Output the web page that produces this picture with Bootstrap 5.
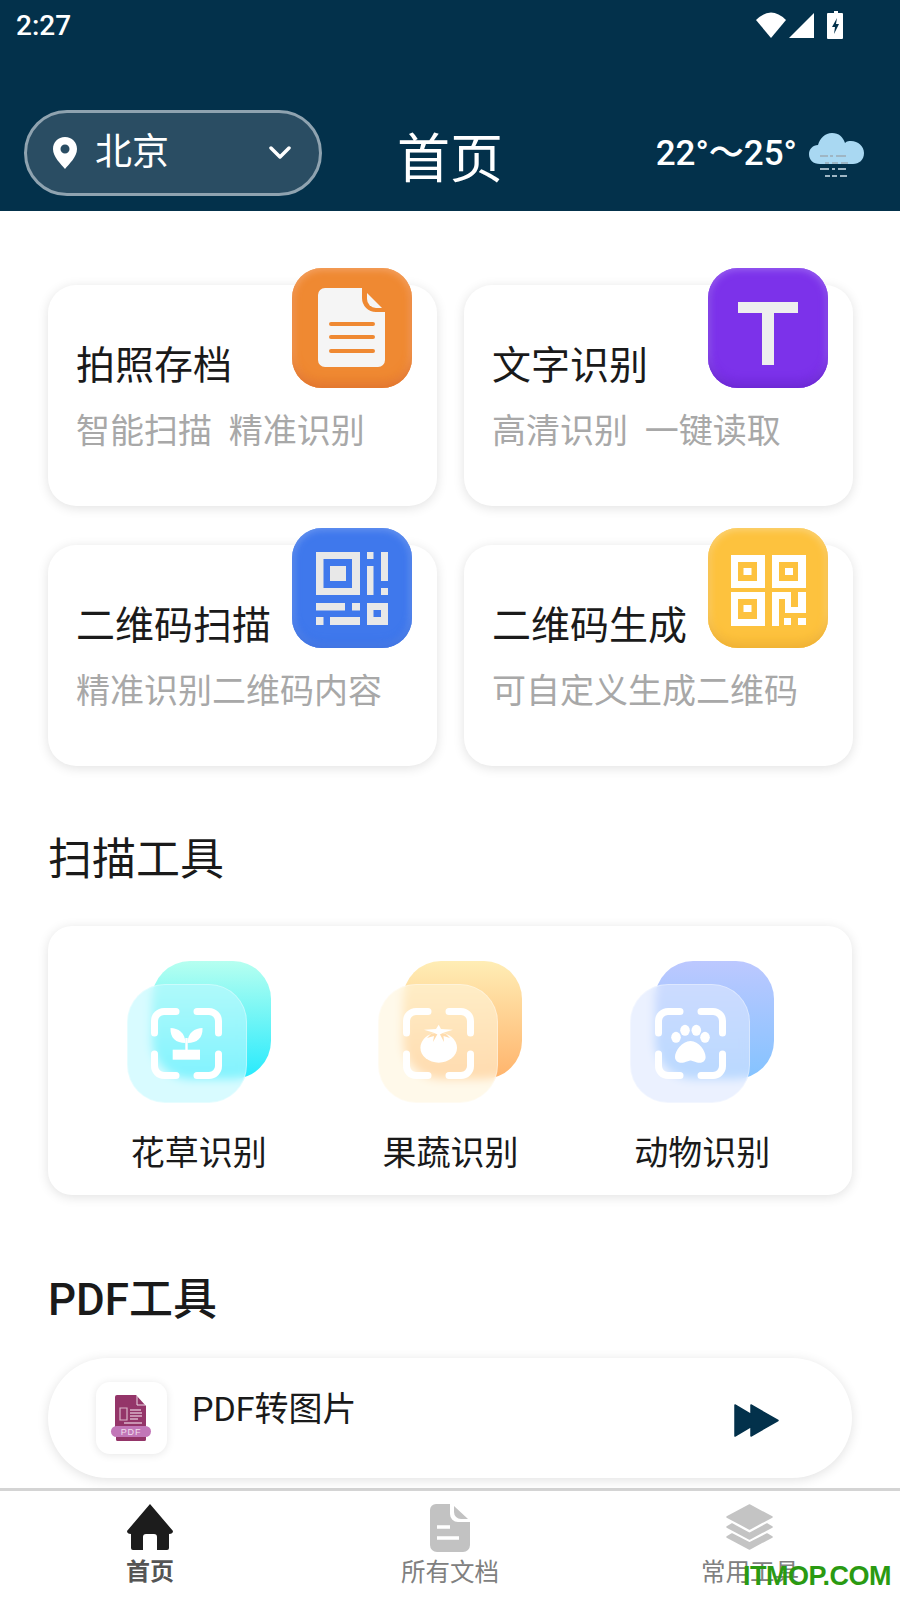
<!DOCTYPE html>
<html lang="zh-CN">
<head>
    <meta charset="UTF-8">
    <meta name="viewport" content="width=device-width, initial-scale=1.0">
    <title>首页</title>
    <link href="https://cdn.jsdelivr.net/npm/bootstrap@5.3.0/dist/css/bootstrap.min.css" rel="stylesheet">
    <style>
        body { width: 900px; height: 1600px; overflow: hidden; background: #fff; color: #1a1a1a;
            font-family: Roboto, "Noto Sans CJK SC", sans-serif; position: relative; }
        .app-head { height: 211px; background: #03314b; color: #fff; }
        .status-row { height: 50px; padding: 0 56px 0 16px; }
        .status-time { font-size: 28px; font-weight: 500; line-height: 50px; margin-top: 1px; }
        .head-row { display: grid; grid-template-columns: 1fr auto 1fr; margin-top: 60px; padding: 0 24px; }
        .city-pill { width: 298px; height: 86px; background: #2a4d63; border: 3px solid #8fa3b0; border-radius: 43px; padding: 0 28px 0 26px; }
        .city-name { font-size: 37px; margin-left: 18px; }
        .head-title { font-size: 53px; line-height: 96px; margin-top: 2px; }
        .temp-text { font-size: 35px; font-weight: 500; margin-top: -10px; margin-right: 12px; }
        .cloud-box { margin-top: -8px; margin-right: 12px; }

        .page-body { padding: 74px 48px 10px; }
        .func-grid { display: grid; grid-template-columns: 389px 389px; column-gap: 27px; row-gap: 39px; }
        .func-card { height: 221px; border: 0; border-radius: 28px; padding: 56px 0 0 28px; box-shadow: 0 2px 12px rgba(0,0,0,.12); }
        .func-title { font-size: 39px; line-height: 50px; }
        .func-sub { font-size: 34px; line-height: 50px; color: #a8a8a8; margin-top: 15px; white-space: pre; }
        .func-icon { position: absolute; top: -17px; right: 25px; width: 120px; height: 120px; border-radius: 30px; }
        .ic-orange { background: #ef8932; box-shadow: inset 0 -8px 10px -2px #e2742a, inset 0 0 7px 2px #f4a467; }
        .ic-purple { background: #7c32ea; box-shadow: inset 0 -8px 10px -2px #6a24d4, inset 0 0 7px 2px #9a62f0; }
        .ic-blue { background: #3f78ec; box-shadow: inset 0 -6px 10px -2px #3a6fe0, inset 0 0 7px 2px #6b97f0; }
        .ic-yellow { background: #fdc23e; box-shadow: inset 0 -8px 10px -2px #f0b02e, inset 0 0 7px 2px #fbd47c; }

        .sect-title { font-size: 44px; line-height: 60px; }
        .sect-one { margin: 64px 0 36px; }
        .sect-two { margin: 75px 0 28px; font-weight: 500; }

        .scan-card { height: 269px; border: 0; border-radius: 24px; padding: 35px 24px 0 25px; box-shadow: 0 2px 12px rgba(0,0,0,.12); }
        .scan-stack { position: relative; width: 144px; height: 142px; }
        .scan-back { position: absolute; top: 0; right: 0; width: 119px; height: 118px; border-radius: 38px; }
        .scan-front { position: absolute; left: 0; bottom: 0; width: 120px; height: 119px; border-radius: 38px;
            background: rgba(255,255,255,.42); border: 1px solid rgba(255,255,255,.35); -webkit-backdrop-filter: blur(5px); backdrop-filter: blur(5px);
            display: flex; align-items: center; justify-content: center; }
        .bk-cyan { background: linear-gradient(180deg, #b6fff0, #26eafd); }
        .bk-orange { background: linear-gradient(180deg, #ffedb5, #ffb36b); }
        .bk-blue { background: linear-gradient(180deg, #bcc8ff, #84c3ff); }
        .ft-cyan { background-color: rgba(190,248,255,.6); }
        .ft-orange { background-color: rgba(255,245,220,.6); }
        .ft-blue { background-color: rgba(222,232,255,.6); }
        .scan-label { font-size: 34px; line-height: 48px; margin-top: 26px; }

        .pdf-card { height: 120px; border: 0; border-radius: 60px; padding: 24px 73px 0 48px; box-shadow: 0 2px 12px rgba(0,0,0,.12); }
        .pdf-tile { width: 71px; height: 72px; border-radius: 14px; background: #fff; box-shadow: 0 1px 8px rgba(0,0,0,.1); }
        .pdf-name { font-size: 34px; line-height: 48px; margin-left: 25px; margin-top: 3px; }
        .ff-icon { margin-top: 21px; }
        .pdf-mini { font-family: "Liberation Sans", sans-serif; font-size: 9px; letter-spacing: .8px; fill: #f0dfec; }

        .tab-bar { height: 112px; border-top: 3px solid #d4d4d4; background: #fff; padding-top: 13px; }
        .tab-label { font-size: 24.5px; line-height: 32px; color: #808080; margin-top: 5px; }
        .tab-on { color: #555; font-weight: 700; font-size: 24px; margin-top: 4px; }
        .tab-icon { height: 48px; }
        .wm-text { position: absolute; right: 9px; bottom: 9px; font-size: 27px; line-height: 30px; letter-spacing: -.5px; font-family: "Liberation Sans", sans-serif; font-weight: 700; color: #2a9a12; }
    </style>
</head>
<body>
    <!-- 顶部 -->
    <header class="app-head">
        <div class="status-row d-flex justify-content-between align-items-center">
            <span class="status-time">2:27</span>
            <svg width="88" height="28" viewBox="0 0 88 28">
                <path d="M0 9 Q15 -6 30 9 L15 27Z" fill="#fff"/>
                <path d="M33 27 L58 2 V27Z" fill="#fff"/>
                <path d="M78 0 h4 v2 h4 a1 1 0 0 1 1 1 v24 a1 1 0 0 1-1 1 h-14 a1 1 0 0 1-1-1 V3 a1 1 0 0 1 1-1 h6Z" fill="#fff"/>
                <path d="M81 7 L76 16 H79 L78 23 L83 13 H80Z" fill="#03314b"/>
            </svg>
        </div>
        <div class="head-row">
            <div class="city-pill d-flex align-items-center">
                <svg width="24" height="32" viewBox="0 0 24 32"><path fill-rule="evenodd" d="M12 0 C5 0 0 5 0 12 C0 20 8 27 12 32 C16 27 24 20 24 12 C24 5 19 0 12 0Z M12 7.500 a4.500 4.500 0 1 1 0 9 a4.500 4.500 0 1 1 0-9Z" fill="#fff"/></svg>
                <span class="city-name">北京</span>
                <svg class="ms-auto" width="22" height="14" viewBox="0 0 22 14"><path d="M2 2 L11 11 L20 2" fill="none" stroke="#fff" stroke-width="3.500" stroke-linecap="round" stroke-linejoin="round"/></svg>
            </div>
            <div class="head-title">首页</div>
            <div class="d-flex justify-content-end align-items-center">
                <span class="temp-text">22°～25°</span>
                <svg class="cloud-box" width="55" height="44" viewBox="0 0 55 44">
                    <path d="M11 31 C4 31 0 27 0 21 C0 16 4 12 9 12 C11 5 16 0 23 0 C30 0 34 4 36 10 C38 8 40 8 42 8 C49 8 55 13 55 20 C55 27 50 31 44 31Z" fill="#a9d8f2"/>
                    <path d="M11 23h8M21 23h3M27 23h10M16 30h4M23 30h6M32 30h7M11 36h9M23 36h3M29 36h8M16 43h5M23 43h5M31 43h7" stroke="#9fb6c4" stroke-width="2"/>
                </svg>
            </div>
        </div>
    </header>

    <main class="page-body">
        <div class="func-grid">
            <div class="card func-card">
                <div class="func-title">拍照存档</div>
                <div class="func-sub">智能扫描  精准识别</div>
                <div class="func-icon ic-orange">
                    <svg width="120" height="120" viewBox="0 0 120 120">
                        <path d="M33 20 H70 V30 a14 14 0 0 0 14 14 H93 V92 a7 7 0 0 1-7 7 H33 a7 7 0 0 1-7-7 V27 a7 7 0 0 1 7-7Z" fill="#f5f5f5"/>
                        <path d="M75 25 L90 40 H84 a9 9 0 0 1-9-9Z" fill="#f5f5f5"/>
                        <path d="M39 56 H81 M39 69 H81 M39 83 H81" stroke="#ef8932" stroke-width="4" stroke-linecap="round"/>
                    </svg>
                </div>
            </div>
            <div class="card func-card">
                <div class="func-title">文字识别</div>
                <div class="func-sub">高清识别  一键读取</div>
                <div class="func-icon ic-purple">
                    <svg width="120" height="120" viewBox="0 0 120 120"><path d="M30 34 H90 V45 H66 V97 H54 V45 H30Z" fill="#eee"/></svg>
                </div>
            </div>
            <div class="card func-card">
                <div class="func-title">二维码扫描</div>
                <div class="func-sub">精准识别二维码内容</div>
                <div class="func-icon ic-blue">
                    <svg width="120" height="120" viewBox="0 0 120 120" fill="#e8e8e8">
                        <path fill-rule="evenodd" d="M24 24 H68 V67 H24Z M31.500 31 V60 H60 V31Z"/>
                        <rect x="38" y="38" width="16" height="15"/>
                        <rect x="75" y="24" width="6.500" height="7"/><rect x="75" y="38" width="6.500" height="29"/>
                        <rect x="89" y="24" width="7" height="29"/><rect x="89" y="60" width="7" height="7"/>
                        <rect x="24" y="75" width="29" height="7.500"/><rect x="60" y="75" width="8" height="7.500"/>
                        <rect x="24" y="89" width="7.500" height="8"/><rect x="38" y="89" width="30" height="8"/>
                        <path fill-rule="evenodd" d="M75 75 H96 V97 H75Z M81.500 82 V89 H89 V82Z"/>
                    </svg>
                </div>
            </div>
            <div class="card func-card">
                <div class="func-title">二维码生成</div>
                <div class="func-sub">可自定义生成二维码</div>
                <div class="func-icon ic-yellow">
                    <svg width="120" height="120" viewBox="0 0 120 120" fill="#fff">
                        <path fill-rule="evenodd" d="M23 27 H57 V60 H23Z M30 34 V53 H49 V34Z"/><rect x="35.500" y="40" width="8" height="7"/>
                        <path fill-rule="evenodd" d="M64 27 H98 V60 H64Z M71 34 V53 H90 V34Z"/><rect x="77" y="40" width="8" height="7"/>
                        <path fill-rule="evenodd" d="M23 64 H57 V98 H23Z M30 71 V91 H49 V71Z"/><rect x="35.500" y="77" width="8" height="7"/>
                        <path d="M64 64 H83 V79 H90 V64 H98 V85 H77 V71 H71 V98 H64Z"/>
                        <rect x="76" y="90" width="7" height="7"/><rect x="90" y="90" width="8" height="7"/>
                    </svg>
                </div>
            </div>
        </div>

        <div class="sect-title sect-one">扫描工具</div>
        <div class="card scan-card">
            <div class="row g-0">
                <div class="col-4 d-flex flex-column align-items-center">
                    <div class="scan-stack">
                        <div class="scan-back bk-cyan"></div>
                        <div class="scan-front ft-cyan">
                            <svg width="71" height="71" viewBox="0 0 71 71" fill="#fff">
                                <path d="M3.500 25 V13 a9.500 9.500 0 0 1 9.500-9.500 H25 M46 3.500 H58 a9.500 9.500 0 0 1 9.500 9.500 V25 M3.500 46 V58 a9.500 9.500 0 0 0 9.500 9.500 H25 M46 67.500 H58 a9.500 9.500 0 0 0 9.500-9.500 V46" fill="none" stroke="#fff" stroke-width="7" stroke-linecap="round"/>
                                <path d="M19.500 20 C27 20 34.500 25 34.500 35 C25 35 19 30 19.500 20Z M51.500 20 C44 20 36.500 25 36.500 35 C46 35 52 30 51.500 20Z"/>
                                <rect x="34.300" y="30" width="2.400" height="12"/><rect x="21.700" y="41.700" width="27.300" height="10"/>
                            </svg>
                        </div>
                    </div>
                    <div class="scan-label">花草识别</div>
                </div>
                <div class="col-4 d-flex flex-column align-items-center">
                    <div class="scan-stack">
                        <div class="scan-back bk-orange"></div>
                        <div class="scan-front ft-orange">
                            <svg width="71" height="71" viewBox="0 0 71 71" fill="#fff">
                                <path d="M3.500 25 V13 a9.500 9.500 0 0 1 9.500-9.500 H25 M46 3.500 H58 a9.500 9.500 0 0 1 9.500 9.500 V25 M3.500 46 V58 a9.500 9.500 0 0 0 9.500 9.500 H25 M46 67.500 H58 a9.500 9.500 0 0 0 9.500-9.500 V46" fill="none" stroke="#fff" stroke-width="7" stroke-linecap="round"/>
                                <ellipse cx="35.700" cy="39.700" rx="18.300" ry="15"/>
                                <path d="M35.700 24 L30 34 L31 28 L24 30 L28 26 Z M35.700 24 L41 34 L40.500 28 L47 30 L43 26Z" fill="#ffdcae"/>
                                <path d="M35.700 16.700 L38 21 L50 21.700 L41 24.500 L35.700 27 L30 24.500 L21 21.700 L33 21Z"/>
                            </svg>
                        </div>
                    </div>
                    <div class="scan-label">果蔬识别</div>
                </div>
                <div class="col-4 d-flex flex-column align-items-center">
                    <div class="scan-stack">
                        <div class="scan-back bk-blue"></div>
                        <div class="scan-front ft-blue">
                            <svg width="71" height="71" viewBox="0 0 71 71" fill="#fff">
                                <path d="M3.500 25 V13 a9.500 9.500 0 0 1 9.500-9.500 H25 M46 3.500 H58 a9.500 9.500 0 0 1 9.500 9.500 V25 M3.500 46 V58 a9.500 9.500 0 0 0 9.500 9.500 H25 M46 67.500 H58 a9.500 9.500 0 0 0 9.500-9.500 V46" fill="none" stroke="#fff" stroke-width="7" stroke-linecap="round"/>
                                <ellipse cx="21" cy="29.300" rx="4.800" ry="5.500"/><ellipse cx="30" cy="22.300" rx="4.800" ry="5.500"/>
                                <ellipse cx="41.300" cy="22.300" rx="4.800" ry="5.500"/><ellipse cx="50" cy="29.300" rx="4.800" ry="5.500"/>
                                <path d="M35.500 33 C27 33 20 43 20 49 C20 54 25 55.500 29 54.500 C32 53.500 34 52.500 35.500 52.500 C37 52.500 39 53.500 42 54.500 C46 55.500 50.600 54 50.600 49 C50.600 43 44 33 35.500 33Z"/>
                            </svg>
                        </div>
                    </div>
                    <div class="scan-label">动物识别</div>
                </div>
            </div>
        </div>

        <div class="sect-title sect-two">PDF工具</div>
        <div class="card pdf-card">
            <div class="d-flex align-items-start">
                <div class="pdf-tile flex-shrink-0">
                    <svg width="71" height="72" viewBox="0 0 71 72">
                        <path d="M19 15 a2 2 0 0 1 2-2 H40 L50 24 V48 H19Z" fill="#943569"/>
                        <path d="M41 14 V23 H49" fill="none" stroke="#ecd9e6" stroke-width="1"/>
                        <path d="M24 26 h7 v12 h-7Z" fill="none" stroke="#d9b3c9" stroke-width="1.200"/>
                        <path d="M34 28h11M34 31h12M34 34h12M34 37h8M28 41h18" stroke="#d9b3c9" stroke-width="1.600"/>
                        <rect x="15" y="44" width="40" height="11" rx="5.500" fill="#c277b8"/>
                        <path d="M20 55 H50 V57.500 a1.500 1.500 0 0 1-1.500 1.500 H21.500 a1.500 1.500 0 0 1-1.500-1.500Z" fill="#943569"/>
                        <text class="pdf-mini" x="35" y="53" text-anchor="middle">PDF</text>
                    </svg>
                </div>
                <div class="pdf-name">PDF转图片</div>
                <svg class="ms-auto ff-icon" width="45" height="35" viewBox="0 0 45 35"><path d="M1 2 L17 11.500 V2 L44 17.500 L17 33 V23.500 L1 33Z" fill="#03314b" stroke="#03314b" stroke-width="1.500" stroke-linejoin="round"/></svg>
            </div>
        </div>
    </main>

    <!-- 底部导航 -->
    <nav class="tab-bar row g-0 text-center">
        <div class="col-4">
            <div class="tab-icon"><svg width="48" height="47" viewBox="0 0 48 47"><path d="M24 0 L47 27 Q47 30 43 30 V44 a2 2 0 0 1-2 2 H31 V33 a3 3 0 0 0-3-3 H20 a3 3 0 0 0-3 3 V46 H7 a2 2 0 0 1-2-2 V30 Q1 30 1 27Z" fill="#1c1c1c"/></svg></div>
            <div class="tab-label tab-on">首页</div>
        </div>
        <div class="col-4">
            <div class="tab-icon"><svg width="40" height="48" viewBox="0 0 40 48"><path d="M6 0 H20 V10 a8 8 0 0 0 8 8 H40 V41 a7 7 0 0 1-7 7 H7 a7 7 0 0 1-7-7 V6 a6 6 0 0 1 6-6Z" fill="#c2c2c2"/><path d="M24 2 L38 15 H31 a7 7 0 0 1-7-7Z" fill="#c2c2c2"/><path d="M7 23 H20 M7 34 H29" stroke="#fff" stroke-width="3.500"/></svg></div>
            <div class="tab-label">所有文档</div>
        </div>
        <div class="col-4">
            <div class="tab-icon"><svg width="49" height="46" viewBox="0 0 49 46" fill="#c4c4c4" stroke="#c4c4c4" stroke-width="1.500" stroke-linejoin="round"><path d="M24.500 1 L47 13 L24.500 25 L2 13Z"/><path d="M7 20 L24.500 29.500 L42 20 L47 23 L24.500 35 L2 23Z"/><path d="M7 30 L24.500 39 L42 30 L47 33 L24.500 45 L2 33Z"/></svg></div>
            <div class="tab-label">常用工具</div>
        </div>
    </nav>
    <div class="wm-text">ITMOP.COM</div>

    <script src="https://cdn.jsdelivr.net/npm/bootstrap@5.3.0/dist/js/bootstrap.bundle.min.js"></script>
</body>
</html>
